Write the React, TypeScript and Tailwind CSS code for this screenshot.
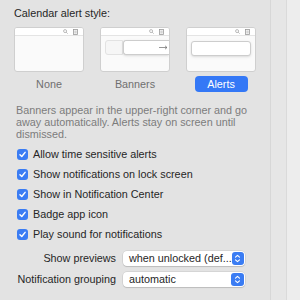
import React from 'react';

const font = { fontFamily: '"Liberation Sans", Arial, sans-serif' };

const TopBar = () => (
    <div className="h-[8px] border-b border-[#e4e4e4] bg-white flex items-center justify-end gap-[5px] pr-[5px]">
        <svg width="5" height="5" viewBox="0 0 6 6">
            <circle cx="2.5" cy="2.5" r="1.8" fill="none" stroke="#9a9a9a" strokeWidth="0.8" />
            <path d="M3.8 3.8 L5.6 5.6" stroke="#9a9a9a" strokeWidth="0.8" />
        </svg>
        <svg width="5" height="6" viewBox="0 0 5 6">
            <rect x="0.5" y="0.5" width="4" height="5" fill="none" stroke="#9a9a9a" strokeWidth="0.8" />
            <path d="M1.3 2 H3.7 M1.3 3 H3.7 M1.3 4 H3.7" stroke="#9a9a9a" strokeWidth="0.5" />
        </svg>
    </div>
);

const Thumb = ({ kind }: { kind: 'none' | 'banners' | 'alerts' }) => (
    <div className="w-[70px] h-[45px] rounded-[3px] border border-[#cfcfcf] bg-[#fafafa] overflow-hidden">
        <TopBar />
        {kind === 'banners' &&
            <div className="flex mt-[4px] ml-[4px] h-[15px]">
                <div className="w-[18px] rounded-l-[3px] border border-[#e2e2e2] bg-[#f6f6f6]" />
                <div className="flex-1 rounded-l-[3px] border border-r-0 border-[#cdcdcd] bg-white shadow-sm flex items-center justify-end pr-[1px]">
                    <svg width="9" height="5" viewBox="0 0 9 5">
                        <path d="M0 2.5 H8 M6 0.8 L8 2.5 L6 4.2" fill="none" stroke="#6a6a6a" strokeWidth="0.7" />
                    </svg>
                </div>
            </div>
        }
        {kind === 'alerts' &&
            <div className="mx-[4px] mt-[5px] h-[15px] rounded-[3px] border border-[#cdcdcd] bg-white shadow-sm" />
        }
    </div>
);

const Check = ({ label }: { label: string }) => (
    <label className="flex items-center gap-[5px] h-[20px]">
        <span className="w-[11px] h-[11px] rounded-[3px] bg-[#3a7cf3] flex items-center justify-center">
            <svg width="9" height="9" viewBox="0 0 10 10">
                <path d="M2.2 5.2 L4.2 7.3 L7.9 2.6" fill="none" stroke="white" strokeWidth="1.6" strokeLinecap="round" strokeLinejoin="round" />
            </svg>
        </span>
        <span className="text-[10.8px] text-[#262626]">{label}</span>
    </label>
);

const Popup = ({ label, value }: { label: string, value: string }) => (
    <div className="flex items-center h-[21px]">
        <span className="w-[109px] text-right pr-[7px] text-[10.8px] text-[#262626] whitespace-nowrap">{label}</span>
        <div className="w-[122px] h-[15px] rounded-[4px] bg-white shadow-[0_0_0_0.5px_rgba(0,0,0,0.12),0_1px_1px_rgba(0,0,0,0.12)] flex items-center justify-between pl-[6px] pr-[1px]">
            <span className="text-[10.8px] text-[#262626] leading-none whitespace-nowrap">{value}</span>
            <span className="w-[13px] h-[13px] rounded-[3px] bg-[#3a7cf3] flex items-center justify-center">
                <svg width="7" height="9" viewBox="0 0 7 9">
                    <path d="M1.5 3.2 L3.5 1.4 L5.5 3.2 M1.5 5.8 L3.5 7.6 L5.5 5.8" fill="none" stroke="white" strokeWidth="1.1" strokeLinecap="round" strokeLinejoin="round" />
                </svg>
            </span>
        </div>
    </div>
);

export default function App() {
    const checks = [
        'Allow time sensitive alerts',
        'Show notifications on lock screen',
        'Show in Notification Center',
        'Badge app icon',
        'Play sound for notifications',
    ];

    return (
        <div className="flex w-[300px] h-[300px] bg-[#ededed] overflow-hidden" style={font}>
            <div className="w-[271px] shrink-0 bg-[#e3e3e3] border-r border-[#d7d7d7] pl-[14px] pt-[5px]">
                <div className="text-[10.8px] text-[#262626] leading-[16px]">Calendar alert style:</div>
                <div className="flex gap-[16px] mt-[6px]">
                    <Thumb kind="none" />
                    <Thumb kind="banners" />
                    <Thumb kind="alerts" />
                </div>
                <div className="flex gap-[16px] mt-[4px] text-[10.8px] text-[#6f6f6f]">
                    <div className="w-[70px] h-[16px] flex items-center justify-center">None</div>
                    <div className="w-[70px] h-[16px] flex items-center justify-center">Banners</div>
                    <div className="w-[70px] h-[16px] flex items-center justify-center">
                        <span className="w-[53px] h-[16px] rounded-[4px] bg-[#3478f6] text-white flex items-center justify-center">Alerts</span>
                    </div>
                </div>
                <p className="mt-[12px] pl-[2px] pr-[10px] text-[10.8px] leading-[12px] text-[#7c7c7c]">
                    Banners appear in the upper-right corner and go away automatically. Alerts stay on screen until dismissed.
                </p>
                <div className="mt-[4px] pl-[3px] flex flex-col">
                    {checks.map(c => <Check key={c} label={c} />)}
                </div>
                <div className="mt-[4px] flex flex-col">
                    <Popup label="Show previews" value="when unlocked (def..." />
                    <Popup label="Notification grouping" value="automatic" />
                </div>
            </div>
            <div className="w-[16px] shrink-0 bg-[#e6e6e6] border-r border-[#dadada]" />
            <div className="flex-1" />
        </div>
    );
}
